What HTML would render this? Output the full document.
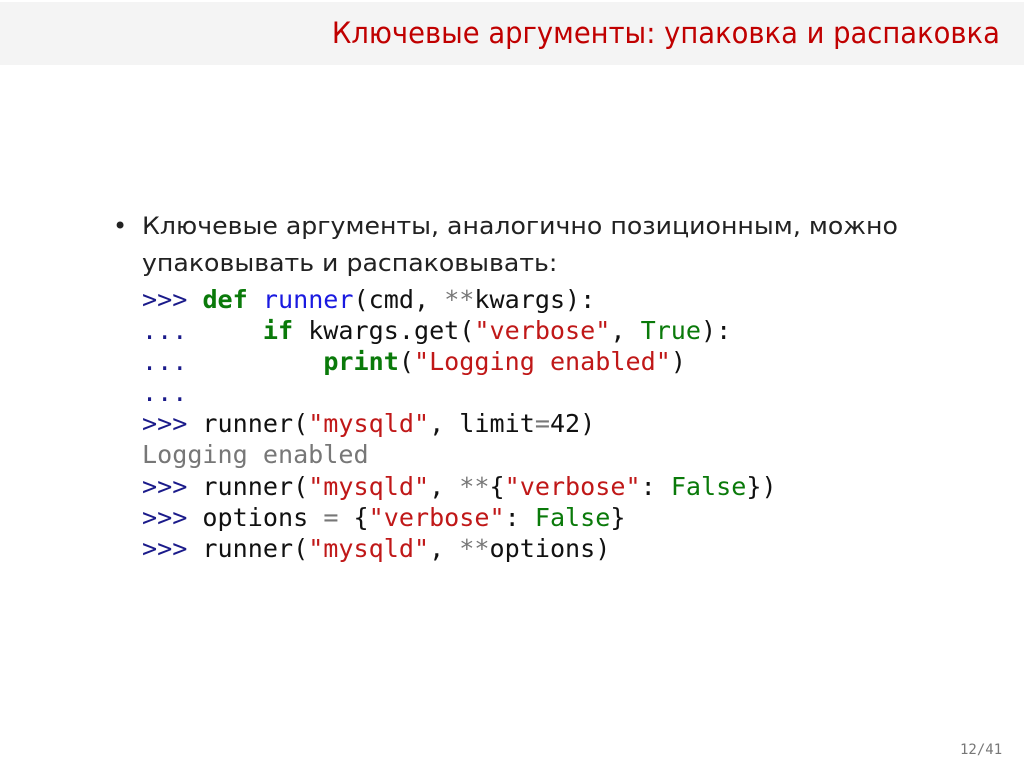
<!DOCTYPE html>
<html><head><meta charset="utf-8"><style>
body{margin:0;width:1024px;height:767px;background:#fff;position:relative;overflow:hidden;font-family:"DejaVu Sans","Liberation Sans",sans-serif}
.hdr{position:absolute;left:0;top:2px;width:1024px;height:63px;background:#f4f4f4}
.title{position:absolute;right:24px;top:16px;color:#c00000;font-size:29px;white-space:nowrap;transform:scaleX(0.945);transform-origin:right top;font-family:"DejaVu Sans",sans-serif}
.bul{position:absolute;left:113px;top:208px;font-size:24px;color:#222;line-height:37px}
.txt{position:absolute;left:142px;top:208px;font-size:24px;color:#222;line-height:37px;white-space:nowrap;transform:scaleX(1.05);transform-origin:left top}
pre{position:absolute;left:142px;top:284px;margin:0;font-family:"DejaVu Sans Mono","Liberation Mono",monospace;font-size:25.1px;line-height:31.1px;color:#111}
.p{color:#1a1a8a}.k{color:#0a7a0a;font-weight:bold}.f{color:#1a1ae0}.s{color:#c01818}.o{color:#777}.c{color:#0a7a0a}
.pg{position:absolute;left:960px;top:742px;font-size:14px;color:#777;font-family:"DejaVu Sans Mono",monospace}
</style></head><body>
<div class="hdr"></div>
<div class="title">Ключевые аргументы: упаковка и распаковка</div>
<div class="bul">•</div>
<div class="txt">Ключевые аргументы, аналогично позиционным, можно<br>упаковывать и распаковывать:</div>
<pre><span class="p">&gt;&gt;&gt;</span> <span class="k">def</span> <span class="f">runner</span>(cmd, <span class="o">**</span>kwargs):
<span class="p">...</span>     <span class="k">if</span> kwargs.get(<span class="s">"verbose"</span>, <span class="c">True</span>):
<span class="p">...</span>         <span class="k">print</span>(<span class="s">"Logging enabled"</span>)
<span class="p">...</span>
<span class="p">&gt;&gt;&gt;</span> runner(<span class="s">"mysqld"</span>, limit<span class="o">=</span>42)
<span class="o">Logging enabled</span>
<span class="p">&gt;&gt;&gt;</span> runner(<span class="s">"mysqld"</span>, <span class="o">**</span>{<span class="s">"verbose"</span>: <span class="c">False</span>})
<span class="p">&gt;&gt;&gt;</span> options <span class="o">=</span> {<span class="s">"verbose"</span>: <span class="c">False</span>}
<span class="p">&gt;&gt;&gt;</span> runner(<span class="s">"mysqld"</span>, <span class="o">**</span>options)</pre>
<div class="pg">12/41</div>
</body></html>
